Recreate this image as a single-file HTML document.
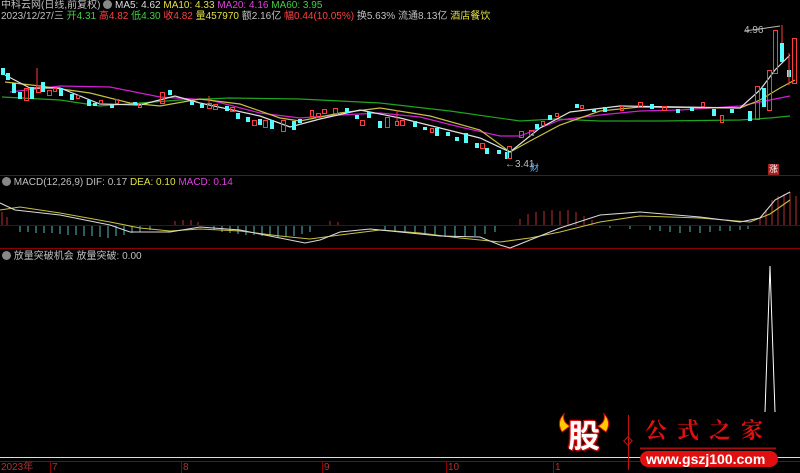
<!DOCTYPE html>
<html><head><meta charset="utf-8"><style>
html,body{margin:0;padding:0;background:#000;width:800px;height:473px;overflow:hidden}
body{position:relative;font-family:"Liberation Sans","Noto Sans CJK SC",sans-serif;font-size:10px;color:#c0c0c0}
.t{position:absolute;white-space:nowrap;font-size:10px;line-height:11px}
svg{position:absolute;left:0;top:0}
</style></head><body>
<svg width="800" height="473" xmlns="http://www.w3.org/2000/svg">
<line x1="0" y1="175.5" x2="800" y2="175.5" stroke="#8b0000"/>
<line x1="0" y1="248.5" x2="800" y2="248.5" stroke="#8b0000"/>
<line x1="0" y1="225.5" x2="800" y2="225.5" stroke="#6a0000"/>
<line x1="0" y1="457.5" x2="800" y2="457.5" stroke="#ddd"/>
<line x1="0" y1="461.5" x2="800" y2="461.5" stroke="#8b0000"/>
<g stroke="#8b0000"><line x1="50.5" y1="461" x2="50.5" y2="473"/><line x1="181.5" y1="461" x2="181.5" y2="473"/><line x1="322.5" y1="461" x2="322.5" y2="473"/><line x1="446.5" y1="461" x2="446.5" y2="473"/><line x1="553.5" y1="461" x2="553.5" y2="473"/></g>
<g fill="none" stroke-width="1.2">
<polyline stroke="#1fa51f" points="2,97 60,100 100,106 180,100 230,98 300,99 380,103 450,111 520,121 555,119 600,121 660,121 740,120 770,118 790,116"/>
<polyline stroke="#d020d0" points="10,92 60,86 110,87 160,97 210,100 260,113 300,118 340,115 380,113 420,117 460,127 500,136 520,136 560,120 600,115 640,111 680,110 740,106 770,100 790,96"/>
<polyline stroke="#c8c040" points="5,82 40,86 90,93 130,103 160,106 200,99 240,104 280,118 300,121 340,113 380,108 430,116 480,130 510,152 530,141 560,125 600,111 640,107 740,108 760,100 780,88 795,80"/>
<polyline stroke="#e0e0e0" points="5,75 30,88 60,88 100,104 140,105 175,96 200,103 260,116 290,127 320,119 360,110 400,118 440,128 480,138 510,152 540,128 570,112 620,106 740,108 760,90 775,70 790,55"/>
</g>
<g fill="#54fcfc">
<rect x="1" y="68" width="4" height="7"/><rect x="6" y="73" width="4" height="7"/><rect x="12" y="83" width="4" height="10"/><rect x="18" y="92" width="4" height="7"/><rect x="30" y="87" width="4" height="12"/><rect x="41" y="82" width="4" height="10"/><rect x="59" y="88" width="4" height="8"/><rect x="70" y="94" width="4" height="6"/><rect x="87" y="100" width="4" height="6"/><rect x="93" y="103" width="4" height="3"/><rect x="110" y="105" width="4" height="3"/><rect x="133" y="102" width="4" height="3"/><rect x="168" y="90" width="4" height="5"/><rect x="190" y="101" width="4" height="4"/><rect x="200" y="104" width="4" height="4"/><rect x="225" y="106" width="4" height="5"/><rect x="236" y="113" width="4" height="6"/><rect x="246" y="117" width="4" height="5"/><rect x="258" y="119" width="4" height="6"/><rect x="270" y="120" width="4" height="9"/><rect x="292" y="121" width="4" height="9"/><rect x="298" y="119" width="4" height="4"/><rect x="345" y="108" width="4" height="5"/><rect x="355" y="115" width="4" height="4"/><rect x="367" y="112" width="4" height="6"/><rect x="378" y="121" width="4" height="7"/><rect x="413" y="121" width="4" height="6"/><rect x="423" y="127" width="4" height="3"/><rect x="435" y="128" width="4" height="8"/><rect x="446" y="132" width="4" height="4"/><rect x="455" y="137" width="4" height="4"/><rect x="464" y="133" width="4" height="10"/><rect x="475" y="143" width="4" height="5"/><rect x="485" y="148" width="4" height="6"/><rect x="497" y="150" width="4" height="4"/><rect x="505" y="152" width="4" height="7"/><rect x="535" y="124" width="4" height="5"/><rect x="548" y="115" width="4" height="5"/><rect x="575" y="104" width="4" height="4"/><rect x="592" y="109" width="4" height="3"/><rect x="603" y="107" width="4" height="5"/><rect x="650" y="104" width="4" height="5"/><rect x="676" y="109" width="4" height="4"/><rect x="690" y="108" width="4" height="3"/><rect x="712" y="109" width="4" height="7"/><rect x="730" y="109" width="4" height="4"/><rect x="748" y="111" width="4" height="10"/><rect x="762" y="88" width="4" height="19"/><rect x="780" y="43" width="4" height="19"/><rect x="787" y="70" width="4" height="7"/>
</g>
<g fill="none" stroke="#ff3c3c">
<rect x="24.5" y="88.5" width="4" height="12"/><rect x="36.5" y="85.5" width="4" height="7"/><rect x="47.5" y="90.5" width="4" height="5"/><rect x="53.5" y="88.5" width="3" height="3"/><rect x="76.5" y="95.5" width="3" height="3"/><rect x="99.5" y="100.5" width="3" height="3"/><rect x="115.5" y="99.5" width="3" height="4"/><rect x="138.5" y="103.5" width="3" height="4"/><rect x="160.5" y="92.5" width="4" height="11"/><rect x="207.5" y="103.5" width="4" height="5"/><rect x="213.5" y="104.5" width="4" height="5"/><rect x="230.5" y="107.5" width="4" height="4"/><rect x="252.5" y="120.5" width="4" height="5"/><rect x="263.5" y="120.5" width="4" height="7"/><rect x="281.5" y="120.5" width="4" height="11"/><rect x="310.5" y="110.5" width="3" height="6"/><rect x="316.5" y="113.5" width="4" height="4"/><rect x="322.5" y="109.5" width="4" height="4"/><rect x="333.5" y="108.5" width="4" height="5"/><rect x="360.5" y="120.5" width="4" height="5"/><rect x="385.5" y="117.5" width="4" height="10"/><rect x="395.5" y="121.5" width="3" height="4"/><rect x="400.5" y="120.5" width="4" height="5"/><rect x="430.5" y="128.5" width="3" height="4"/><rect x="480.5" y="143.5" width="4" height="5"/><rect x="507.5" y="146.5" width="4" height="12"/><rect x="519.5" y="131.5" width="4" height="6"/><rect x="529.5" y="130.5" width="4" height="5"/><rect x="541.5" y="121.5" width="3" height="4"/><rect x="555.5" y="113.5" width="3" height="3"/><rect x="580.5" y="105.5" width="3" height="3"/><rect x="620.5" y="106.5" width="3" height="4"/><rect x="638.5" y="102.5" width="4" height="5"/><rect x="662.5" y="106.5" width="4" height="4"/><rect x="701.5" y="102.5" width="3" height="4"/><rect x="720.5" y="115.5" width="3" height="7"/><rect x="755.5" y="86.5" width="4" height="33"/><rect x="767.5" y="70.5" width="4" height="40"/><rect x="773.5" y="30.5" width="4" height="43"/><rect x="792.5" y="38.5" width="4" height="45"/>
</g>
<g stroke="#ff3c3c"><line x1="37" y1="68" x2="37" y2="86"/><line x1="209" y1="96" x2="209" y2="104"/><line x1="397" y1="110" x2="397" y2="122"/><line x1="782" y1="25" x2="782" y2="43"/><line x1="789" y1="53" x2="789" y2="85"/></g>
<polyline points="745,31 780,26" stroke="#bbb" fill="none"/>
<g stroke="#b83030">
<line x1="2" y1="225" x2="2" y2="212"/><line x1="7" y1="225" x2="7" y2="217"/><line x1="175" y1="225" x2="175" y2="221"/><line x1="183" y1="225" x2="183" y2="220"/><line x1="191" y1="225" x2="191" y2="220"/><line x1="198" y1="225" x2="198" y2="222"/><line x1="330" y1="225" x2="330" y2="221"/><line x1="338" y1="225" x2="338" y2="222"/>
<line x1="520" y1="225" x2="520" y2="219"/><line x1="528" y1="225" x2="528" y2="214"/><line x1="536" y1="225" x2="536" y2="212"/><line x1="544" y1="225" x2="544" y2="211"/><line x1="552" y1="225" x2="552" y2="210"/><line x1="560" y1="225" x2="560" y2="211"/><line x1="568" y1="225" x2="568" y2="210"/><line x1="576" y1="225" x2="576" y2="212"/><line x1="584" y1="225" x2="584" y2="216"/><line x1="592" y1="225" x2="592" y2="220"/>
<line x1="760" y1="225" x2="760" y2="218"/><line x1="766" y1="225" x2="766" y2="210"/><line x1="772" y1="225" x2="772" y2="200"/><line x1="778" y1="225" x2="778" y2="196"/><line x1="784" y1="225" x2="784" y2="194"/><line x1="790" y1="225" x2="790" y2="192"/><line x1="796" y1="225" x2="796" y2="196"/>
</g>
<g stroke="#5ab8b8">
<line x1="20" y1="226" x2="20" y2="232"/><line x1="28" y1="226" x2="28" y2="232"/><line x1="36" y1="226" x2="36" y2="233"/><line x1="44" y1="226" x2="44" y2="233"/><line x1="52" y1="226" x2="52" y2="233"/><line x1="60" y1="226" x2="60" y2="234"/><line x1="68" y1="226" x2="68" y2="235"/><line x1="76" y1="226" x2="76" y2="235"/><line x1="84" y1="226" x2="84" y2="236"/><line x1="92" y1="226" x2="92" y2="236"/><line x1="100" y1="226" x2="100" y2="237"/><line x1="108" y1="226" x2="108" y2="238"/><line x1="116" y1="226" x2="116" y2="236"/><line x1="124" y1="226" x2="124" y2="235"/><line x1="132" y1="226" x2="132" y2="233"/><line x1="140" y1="226" x2="140" y2="232"/><line x1="150" y1="226" x2="150" y2="230"/>
<line x1="214" y1="226" x2="214" y2="230"/><line x1="222" y1="226" x2="222" y2="232"/><line x1="230" y1="226" x2="230" y2="233"/><line x1="238" y1="226" x2="238" y2="234"/><line x1="246" y1="226" x2="246" y2="235"/><line x1="254" y1="226" x2="254" y2="235"/><line x1="262" y1="226" x2="262" y2="236"/><line x1="270" y1="226" x2="270" y2="236"/><line x1="278" y1="226" x2="278" y2="237"/><line x1="286" y1="226" x2="286" y2="236"/><line x1="294" y1="226" x2="294" y2="236"/><line x1="302" y1="226" x2="302" y2="234"/><line x1="310" y1="226" x2="310" y2="232"/>
<line x1="385" y1="226" x2="385" y2="230"/><line x1="395" y1="226" x2="395" y2="232"/><line x1="405" y1="226" x2="405" y2="233"/><line x1="415" y1="226" x2="415" y2="234"/><line x1="425" y1="226" x2="425" y2="234"/><line x1="435" y1="226" x2="435" y2="236"/><line x1="445" y1="226" x2="445" y2="237"/><line x1="455" y1="226" x2="455" y2="238"/><line x1="465" y1="226" x2="465" y2="237"/><line x1="475" y1="226" x2="475" y2="236"/><line x1="485" y1="226" x2="485" y2="234"/><line x1="495" y1="226" x2="495" y2="232"/>
<line x1="610" y1="226" x2="610" y2="228"/><line x1="630" y1="226" x2="630" y2="229"/><line x1="650" y1="226" x2="650" y2="230"/><line x1="660" y1="226" x2="660" y2="231"/><line x1="670" y1="226" x2="670" y2="232"/><line x1="680" y1="226" x2="680" y2="233"/><line x1="690" y1="226" x2="690" y2="232"/><line x1="700" y1="226" x2="700" y2="233"/><line x1="710" y1="226" x2="710" y2="232"/><line x1="720" y1="226" x2="720" y2="231"/><line x1="730" y1="226" x2="730" y2="231"/><line x1="740" y1="226" x2="740" y2="230"/><line x1="748" y1="226" x2="748" y2="229"/>
</g>
<g fill="none" stroke-width="1.1">
<polyline stroke="#c8c040" points="0,210 20,207 60,213 110,222 140,228 170,231 200,229 240,231 280,236 310,239 340,235 380,230 420,233 460,238 500,242 530,238 560,232 600,222 640,216 700,218 750,222 770,214 790,200"/>
<polyline stroke="#d8d8d8" points="0,203 15,210 60,215 110,225 130,232 170,232 200,227 240,230 280,238 305,243 320,240 340,232 370,229 400,232 440,236 480,237 500,245 510,248 530,240 560,228 600,215 640,212 700,217 740,222 760,218 775,200 790,192"/>
</g>
<polyline points="765,412 770,266 775,412" fill="none" stroke="#fff"/>
<path d="M562,432 q-6,-10 2,-18 q-2,8 6,12 z M606,432 q6,-10 -2,-18 q2,8 -6,12 z" fill="#ffcc00" stroke="#e01010"/>
<line x1="628.5" y1="415" x2="628.5" y2="470" stroke="#c81010"/>
<rect x="625" y="438" width="6" height="6" transform="rotate(45 628 441)" fill="none" stroke="#c81010"/>
<line x1="640" y1="448.5" x2="776" y2="448.5" stroke="#a01010" stroke-width="2"/>
<rect x="640" y="451" width="138" height="16" rx="8" fill="#e01010"/>
</svg>
<div class="t" style="left:1px;top:0px;color:#c0c0c0">中科云网(日线,前复权) <span style="display:inline-block;width:9px;height:9px;border-radius:50%;background:#888;vertical-align:-1px"></span> <span style="color:#ddd">MA5: 4.62</span> <span style="color:#e0e040">MA10: 4.33</span> <span style="color:#e040e0">MA20: 4.16</span> <span style="color:#40d040">MA60: 3.95</span></div>
<div class="t" style="left:1px;top:11px">2023/12/27/三 <span style="color:#40d040">开4.31</span> <span style="color:#ff4040">高4.82</span> <span style="color:#40d040">低4.30</span> <span style="color:#ff4040">收4.82</span> <span style="color:#e0e040">量457970</span> 额2.16亿 <span style="color:#ff4040">幅0.44(10.05%)</span> 换5.63% 流通8.13亿 <span style="color:#e0e040">酒店餐饮</span></div>
<div class="t" style="left:744px;top:25px;color:#bbb">4.96</div>
<div class="t" style="left:505px;top:159px;color:#bbb">←3.41</div>
<div class="t" style="left:530px;top:163px;color:#5ab8ff;font-size:9px">财</div>
<div style="position:absolute;left:768px;top:164px;width:11px;height:11px;overflow:hidden;color:#fff;background:#a02020;font-size:9px;line-height:11px;text-align:center">涨</div>
<div class="t" style="left:2px;top:177px"><span style="display:inline-block;width:9px;height:9px;border-radius:50%;background:#888;vertical-align:-1px"></span> MACD(12,26,9) DIF: 0.17 <span style="color:#e0e040">DEA: 0.10</span> <span style="color:#e040e0">MACD: 0.14</span></div>
<div class="t" style="left:2px;top:251px"><span style="display:inline-block;width:9px;height:9px;border-radius:50%;background:#888;vertical-align:-1px"></span> 放量突破机会 放量突破: 0.00</div>
<div class="t" style="left:1px;top:462px;color:#b03030">2023年</div>
<div class="t" style="left:52px;top:462px;color:#b03030">7</div>
<div class="t" style="left:183px;top:462px;color:#b03030">8</div>
<div class="t" style="left:324px;top:462px;color:#b03030">9</div>
<div class="t" style="left:448px;top:462px;color:#b03030">10</div>
<div class="t" style="left:555px;top:462px;color:#b03030">1</div>
<div class="t" style="left:568px;top:416px;font-size:32px;line-height:40px;font-weight:bold;color:#fff;text-shadow:0 0 2px #e01010,0 0 3px #e01010,1px 1px 0 #e01010,-1px -1px 0 #e01010">股</div>
<div class="t" style="left:645px;top:417px;font-size:22px;line-height:26px;color:#e01010;letter-spacing:10px;font-family:'Noto Serif CJK SC',serif;font-weight:bold">公式之家</div>
<div class="t" style="left:646px;top:452px;font-size:14px;line-height:15px;font-weight:bold;color:#fff">www.gszj100.com</div>
</body></html>
